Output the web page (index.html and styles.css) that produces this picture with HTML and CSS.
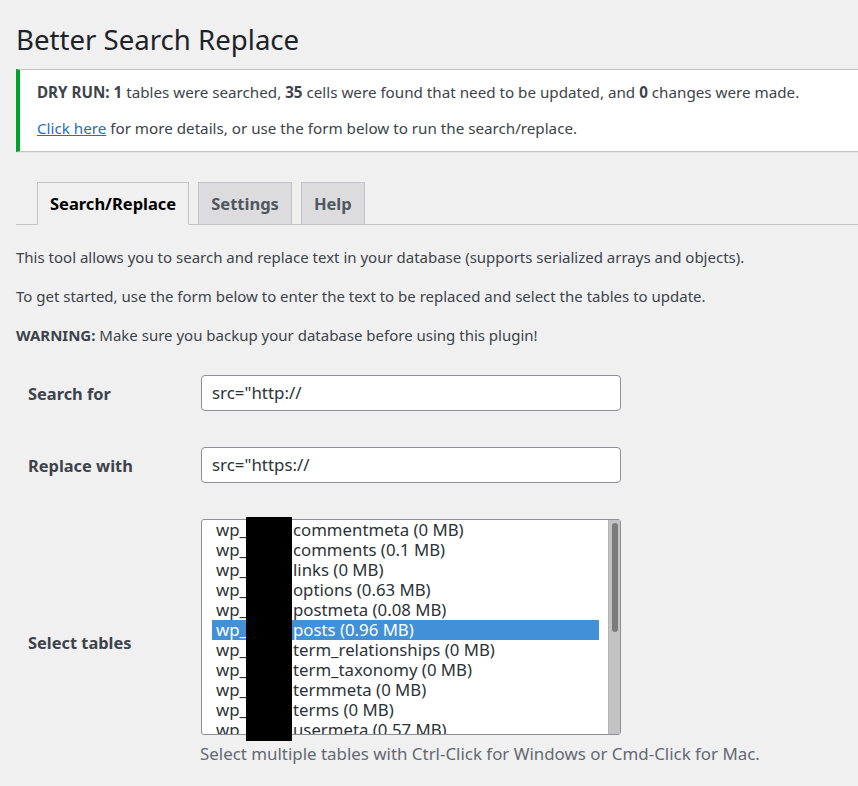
FILE: index.html
```html
<!DOCTYPE html>
<html>
<head>
<meta charset="utf-8">
<link rel="stylesheet" href="styles.css">
</head>
<body>
<div class="wrap">
  <h1 class="title">Better Search Replace</h1>
  <div class="notice">
    <p><strong>DRY RUN:</strong> <strong>1</strong> tables were searched, <strong>35</strong> cells were found that need to be updated, and <strong>0</strong> changes were made.</p>
    <p><a href="#">Click here</a> for more details, or use the form below to run the search/replace.</p>
  </div>
  <div class="tabs">
    <span class="tab active">Search/Replace</span>
    <span class="tab">Settings</span>
    <span class="tab">Help</span>
  </div>
  <p class="intro first">This tool allows you to search and replace text in your database (supports serialized arrays and objects).</p>
  <p class="intro">To get started, use the form below to enter the text to be replaced and select the tables to update.</p>
  <p class="intro"><strong>WARNING:</strong> Make sure you backup your database before using this plugin!</p>

  <div class="form">
    <div class="row">
      <div class="label">Search for</div>
      <div class="field"><div class="input">src="http://</div></div>
    </div>
    <div class="row">
      <div class="label">Replace with</div>
      <div class="field"><div class="input">src="https://</div></div>
    </div>
    <div class="row">
      <div class="label">Select tables</div>
      <div class="field">
        <div class="select">
          <div class="options">
            <div class="opt">wp_<span class="gap"></span>commentmeta (0 MB)</div>
            <div class="opt">wp_<span class="gap"></span>comments (0.1 MB)</div>
            <div class="opt">wp_<span class="gap"></span>links (0 MB)</div>
            <div class="opt">wp_<span class="gap"></span>options (0.63 MB)</div>
            <div class="opt">wp_<span class="gap"></span>postmeta (0.08 MB)</div>
            <div class="opt sel">wp_<span class="gap"></span>posts (0.96 MB)</div>
            <div class="opt">wp_<span class="gap"></span>term_relationships (0 MB)</div>
            <div class="opt">wp_<span class="gap"></span>term_taxonomy (0 MB)</div>
            <div class="opt">wp_<span class="gap"></span>termmeta (0 MB)</div>
            <div class="opt">wp_<span class="gap"></span>terms (0 MB)</div>
            <div class="opt">wp_<span class="gap"></span>usermeta (0.57 MB)</div>
          </div>
          <div class="scrollbar"><div class="thumb"></div></div>
          <div class="redact"></div>
        </div>
        <p class="desc">Select multiple tables with Ctrl-Click for Windows or Cmd-Click for Mac.</p>
      </div>
    </div>
  </div>
</div>
</body>
</html>
```

FILE: styles.css
```css
html, body {
  margin: 0;
  padding: 0;
  background: #f0f0f1;
}
body {
  font-family: "Noto Sans", "Open Sans", sans-serif;
  font-size: 15px;
  color: #3c434a;
  overflow: hidden;
}
.wrap {
  padding: 0 0 0 16px;
}
.title {
  font-size: 27.6px;
  font-weight: 400;
  color: #1d2327;
  margin: 0;
  padding: 20px 0 11px;
  line-height: 38px;
}
.notice {
  background: #fff;
  border: 1px solid #c3c4c7;
  border-left: 4px solid #00a32a;
  border-right: none;
  padding: 0 17px;
  box-shadow: 0 1px 1px rgba(0,0,0,0.04);
}
.notice p {
  font-size: 15.2px;
  margin: 10px 0 11px;
  line-height: 24px;
}
.notice p + p {
  margin-top: 12px;
}
.notice a {
  color: #2271b1;
}
.tabs {
  display: flex;
  gap: 9px;
  margin-top: 30px;
  padding-left: 21px;
  border-bottom: 1px solid #c3c4c7;
  height: 42px;
  align-items: flex-end;
}
.tab {
  display: block;
  box-sizing: border-box;
  height: 43px;
  margin-bottom: -1px;
  padding: 0 12px;
  line-height: 41px;
  font-weight: 700;
  font-size: 16.5px;
  color: #50575e;
  background: #dcdcde;
  border: 1px solid #c3c4c7;
}
.tab.active {
  background: #f0f0f1;
  color: #000;
  border-bottom-color: #f0f0f1;
}
.intro {
  margin: 16px 0;
  line-height: 23px;
}
.intro.first {
  margin-top: 21px;
}
.form {
  margin-top: 28px;
  display: flex;
  flex-direction: column;
  gap: 36px;
}
.row {
  display: flex;
  align-items: center;
}
.label {
  width: 185px;
  padding-left: 12px;
  box-sizing: border-box;
  font-weight: 700;
  font-size: 16.4px;
  color: #3c434a;
  flex: none;
}
.field {
  flex: none;
}
.input {
  box-sizing: border-box;
  width: 420px;
  height: 36px;
  border: 1px solid #8c8f94;
  border-radius: 4px;
  background: #fff;
  padding: 0 10px;
  line-height: 34px;
  font-size: 16.9px;
  color: #2c3338;
}
.select {
  position: relative;
  box-sizing: border-box;
  width: 420px;
  height: 216px;
  border: 1px solid #8c8f94;
  border-radius: 3px;
  background: #fff;
  display: flex;
}
.options {
  flex: 1;
  overflow: hidden;
  padding: 0 9px 0 10px;
}
.opt {
  height: 20px;
  line-height: 20px;
  padding-left: 4px;
  font-size: 16.8px;
  color: #2c3338;
  white-space: nowrap;
}
.opt.sel {
  background: #4190d8;
  color: #fff;
}
.gap {
  display: inline-block;
  width: 46px;
}
.scrollbar {
  width: 12px;
  background: #c3c3c3;
  border-left: 1px solid #b5b5b5;
  flex: none;
  padding-top: 3px;
  box-sizing: border-box;
}
.thumb {
  width: 6px;
  margin-left: 3px;
  height: 109px;
  border-radius: 3px;
  background: #7b7b7b;
}
.redact {
  position: absolute;
  left: 44px;
  top: -3px;
  width: 46px;
  height: 224px;
  background: #000;
}
.desc {
  margin: 7px 0 0 -1px;
  color: #646970;
  line-height: 24px;
  font-size: 16.9px;
}
```
